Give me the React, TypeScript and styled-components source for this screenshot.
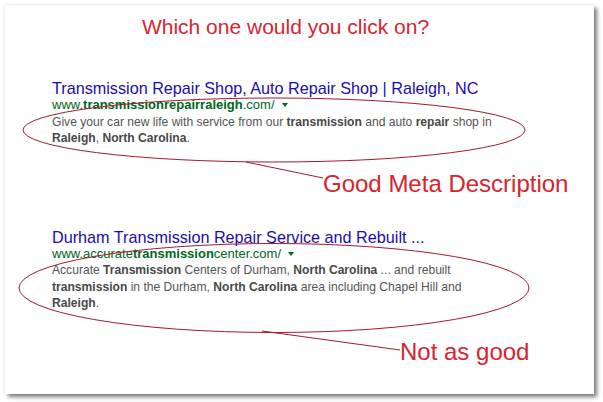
import React from "react";
import styled, { createGlobalStyle } from "styled-components";

const Global = createGlobalStyle`
  html, body { margin: 0; padding: 0; background: #ffffff; }
  body { font-family: Arial, "Liberation Sans", sans-serif; }
`;

const Page = styled.div`
  position: relative;
  width: 603px;
  height: 402px;
  padding: 5px 0 0 5px;
  box-sizing: border-box;
  overflow: hidden;
`;

const Card = styled.div`
  width: 589px;
  height: 389px;
  background: #ffffff;
  box-shadow: 3px 3px 4px rgba(0, 0, 0, 0.5), 0 0 3px rgba(0, 0, 0, 0.12);
  display: flex;
  flex-direction: column;
  padding: 10px 0 0 47px;
  box-sizing: border-box;
`;

const Heading = styled.h1`
  margin: 0 28px 0 -47px;
  font-family: "Liberation Sans", Arial, sans-serif;
  font-weight: normal;
  font-size: 21px;
  line-height: 24px;
  color: #d7262f;
  text-align: center;
`;

const Result = styled.div<{ $top: number }>`
  display: flex;
  flex-direction: column;
  margin-top: ${(p) => p.$top}px;
  font-family: "Liberation Sans", Arial, sans-serif;
`;

const Title = styled.div`
  font-size: 16.2px;
  line-height: 18px;
  color: #1a0dab;
  white-space: nowrap;
`;

const Url = styled.div`
  display: flex;
  align-items: center;
  font-size: 13px;
  line-height: 15px;
  color: #006621;
  white-space: nowrap;
  b { font-weight: bold; }
`;

const Caret = styled.span`
  display: inline-block;
  width: 0;
  height: 0;
  margin-left: 7px;
  margin-top: 1px;
  border-left: 3px solid transparent;
  border-right: 3px solid transparent;
  border-top: 4px solid #006621;
`;

const Snippet = styled.div`
  margin-top: 1.2px;
  font-size: 12.1px;
  line-height: 16.5px;
  color: #545454;
  white-space: nowrap;
  b { color: #484848; font-weight: bold; }
`;

const Label = styled.div<{ $left: number; $top: number }>`
  margin-top: ${(p) => p.$top}px;
  margin-left: ${(p) => p.$left}px;
  font-family: "Liberation Sans", Arial, sans-serif;
  font-size: 24px;
  line-height: 28px;
  color: #d7232d;
  white-space: nowrap;
`;

const Overlay = styled.svg`
  position: absolute;
  left: 0;
  top: 0;
  pointer-events: none;
`;

export default function App() {
  return (
    <>
      <Global />
      <Page>
        <Card>
          <Heading>Which one would you click on?</Heading>
          <Result $top={40.4}>
            <Title>Transmission Repair Shop, Auto Repair Shop | Raleigh, NC</Title>
            <Url>
              www.<b>transmissionrepairraleigh</b>.com/
              <Caret />
            </Url>
            <Snippet>
              Give your car new life with service from our <b>transmission</b> and auto <b>repair</b> shop in
              <br />
              <b>Raleigh</b>, <b>North Carolina</b>.
            </Snippet>
          </Result>
          <Label $left={271} $top={23}>Good Meta Description</Label>
          <Result $top={30.7}>
            <Title>Durham Transmission Repair Service and Rebuilt ...</Title>
            <Url>
              www.accurate<b>transmission</b>center.com/
              <Caret />
            </Url>
            <Snippet>
              Accurate <b>Transmission</b> Centers of Durham, <b>North Carolina</b> ... and rebuilt
              <br />
              <b>transmission</b> in the Durham, <b>North Carolina</b> area including Chapel Hill and
              <br />
              <b>Raleigh</b>.
            </Snippet>
          </Result>
          <Label $left={348} $top={25.6}>Not as good</Label>
        </Card>
        <Overlay width="603" height="402" viewBox="0 0 603 402">
          <g fill="none" stroke="#a5192f" strokeWidth="1">
            <ellipse cx="274" cy="130" rx="251" ry="32" />
            <polyline points="246,162 323,178" />
            <ellipse cx="274" cy="288" rx="255" ry="44.5" />
            <polyline points="262,331 400,350" />
          </g>
        </Overlay>
      </Page>
    </>
  );
}
